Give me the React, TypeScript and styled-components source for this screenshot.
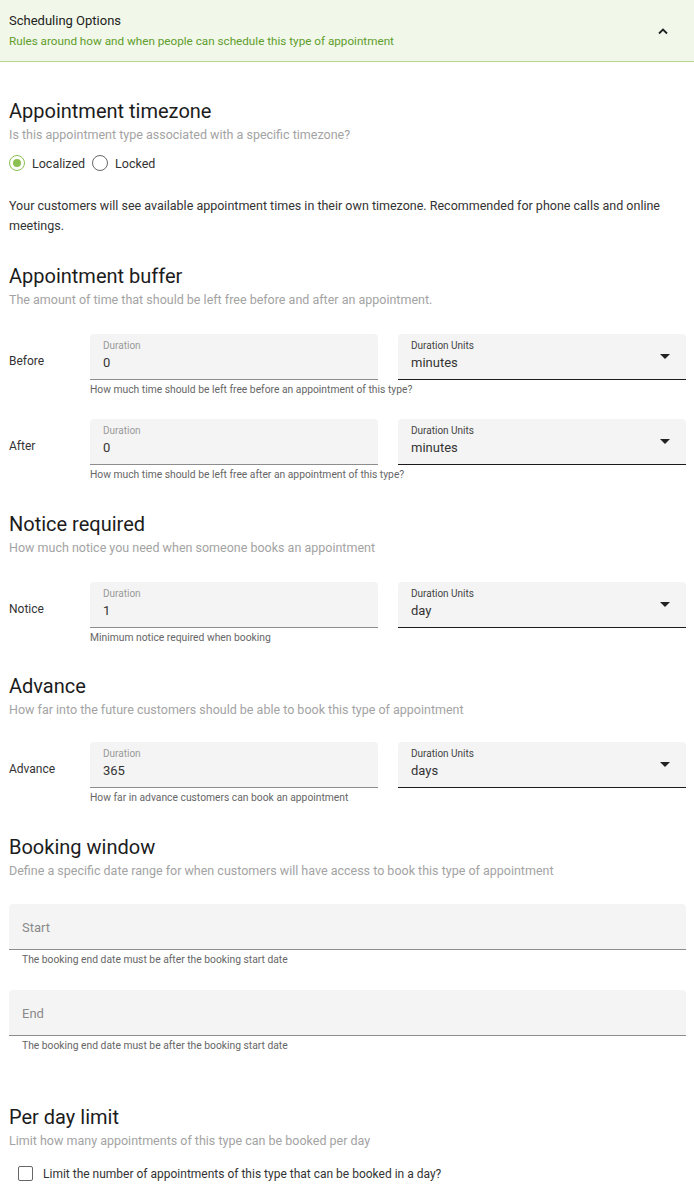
import React, { useState } from "react";
import styled, { createGlobalStyle } from "styled-components";

const GlobalStyle = createGlobalStyle`
  html, body {
    margin: 0;
    padding: 0;
    background: #ffffff;
    font-family: Roboto, "Noto Sans", "Liberation Sans", sans-serif;
  }
  * { box-sizing: border-box; }
`;

const Page = styled.div`
  width: 694px;
  background: #fff;
`;

const Header = styled.div`
  display: flex;
  align-items: center;
  justify-content: space-between;
  height: 62px;
  padding: 0 25px 0 9px;
  background: #f1f7e9;
  border-bottom: 1px solid #b4d78f;
`;

const HeaderText = styled.div`
  display: flex;
  flex-direction: column;
  gap: 4px;
`;

const HeaderTitle = styled.div`
  font-size: 13px;
  line-height: 16px;
  color: #222;
`;

const HeaderSub = styled.div`
  font-size: 11.7px;
  line-height: 16px;
  color: #5f9d2c;
`;

const Body = styled.div`
  padding: 0 8px 40px 9px;
`;

const Section = styled.section<{ $top: number }>`
  margin-top: ${(p) => p.$top}px;
`;

const Heading = styled.h2`
  margin: 0;
  font-size: 20px;
  line-height: 24px;
  font-weight: 400;
  color: #1c1c1c;
`;

const Sub = styled.p`
  margin: 4px 0 0;
  font-size: 12.5px;
  line-height: 16px;
  color: #a3a3a3;
`;

const RadioRow = styled.div`
  display: flex;
  align-items: center;
  margin-top: 10px;
  height: 20px;
`;

const RadioOption = styled.label`
  display: flex;
  align-items: center;
  gap: 7px;
  margin-right: 7px;
  font-size: 12.5px;
  color: #333;
  cursor: pointer;
`;

const RadioCircle = styled.span<{ $on: boolean }>`
  position: relative;
  width: 16px;
  height: 16px;
  border-radius: 50%;
  border: 1.5px solid ${(p) => (p.$on ? "#8cc152" : "#666")};
  &::after {
    content: "";
    display: ${(p) => (p.$on ? "block" : "none")};
    position: absolute;
    inset: 3px;
    border-radius: 50%;
    background: #8cc152;
  }
`;

const Paragraph = styled.p`
  margin: 23px 0 0;
  font-size: 12.5px;
  line-height: 20px;
  color: #333;
  padding-right: 24px;
`;

const Rows = styled.div<{ $top?: number }>`
  margin-top: ${(p) => p.$top ?? 26}px;
  display: flex;
  flex-direction: column;
  gap: 23px;
`;

const FieldRow = styled.div`
  display: grid;
  grid-template-columns: 61px 288px 288px;
  column-gap: 20px;
  align-items: start;
`;

const RowLabel = styled.div`
  font-size: 12px;
  line-height: 16px;
  padding-top: 19px;
  color: #333;
`;

const FieldCol = styled.div`
  display: flex;
  flex-direction: column;
`;

const FieldBox = styled.div<{ $dark?: boolean }>`
  position: relative;
  height: 46px;
  background: #f4f4f4;
  border-radius: 4px 4px 0 0;
  border-bottom: 1px solid ${(p) => (p.$dark ? "#1a1a1a" : "#8d8d8d")};
  padding: 6px 13px 0;
  display: flex;
  flex-direction: column;
`;

const FloatLabel = styled.span<{ $dark?: boolean }>`
  font-size: 10px;
  line-height: 12px;
  color: ${(p) => (p.$dark ? "#444" : "#9a9a9a")};
`;

const Value = styled.span`
  margin-top: 3px;
  font-size: 13px;
  line-height: 16px;
  color: #333;
`;

const Placeholder = styled.span`
  margin-top: 10px;
  font-size: 13px;
  line-height: 16px;
  color: #8a8a8a;
`;

const Caret = styled.span`
  position: absolute;
  right: 16px;
  top: 20px;
  width: 0;
  height: 0;
  border-left: 5px solid transparent;
  border-right: 5px solid transparent;
  border-top: 5px solid #222;
`;

const Helper = styled.div<{ $inset?: boolean }>`
  margin-top: 4px;
  padding-left: ${(p) => (p.$inset ? 13 : 0)}px;
  font-size: 10.3px;
  line-height: 12px;
  color: #666;
  white-space: nowrap;
`;

const WideFields = styled.div`
  margin-top: 25px;
  display: flex;
  flex-direction: column;
  gap: 24px;
`;

const CheckRow = styled.label`
  display: flex;
  align-items: center;
  gap: 10px;
  margin-top: 17px;
  padding-left: 9px;
  font-size: 12px;
  color: #333;
  cursor: pointer;
`;

const CheckBox = styled.span`
  width: 15px;
  height: 15px;
  border: 1.5px solid #666;
  border-radius: 2px;
`;

type DurRow = {
  label: string;
  value: string;
  unit: string;
  help: string;
};

const DurationRow: React.FC<DurRow> = ({ label, value, unit, help }) => (
  <FieldRow>
    <RowLabel>{label}</RowLabel>
    <FieldCol>
      <FieldBox>
        <FloatLabel>Duration</FloatLabel>
        <Value>{value}</Value>
      </FieldBox>
      <Helper>{help}</Helper>
    </FieldCol>
    <FieldCol>
      <FieldBox $dark>
        <FloatLabel $dark>Duration Units</FloatLabel>
        <Value>{unit}</Value>
        <Caret />
      </FieldBox>
    </FieldCol>
  </FieldRow>
);

const ChevronUp = () => (
  <svg width="12" height="8" viewBox="0 0 12 8">
    <path d="M2 6.5 L6 2.5 L10 6.5" fill="none" stroke="#222" strokeWidth="1.8" />
  </svg>
);

export default function App() {
  const [tz, setTz] = useState("localized");
  return (
    <Page>
      <GlobalStyle />
      <Header>
        <HeaderText>
          <HeaderTitle>Scheduling Options</HeaderTitle>
          <HeaderSub>Rules around how and when people can schedule this type of appointment</HeaderSub>
        </HeaderText>
        <ChevronUp />
      </Header>
      <Body>
        <Section $top={37}>
          <Heading>Appointment timezone</Heading>
          <Sub>Is this appointment type associated with a specific timezone?</Sub>
          <RadioRow>
            <RadioOption onClick={() => setTz("localized")}>
              <RadioCircle $on={tz === "localized"} />
              Localized
            </RadioOption>
            <RadioOption onClick={() => setTz("locked")}>
              <RadioCircle $on={tz === "locked"} />
              Locked
            </RadioOption>
          </RadioRow>
          <Paragraph>
            Your customers will see available appointment times in their own timezone. Recommended for phone calls and online meetings.
          </Paragraph>
        </Section>

        <Section $top={28}>
          <Heading>Appointment buffer</Heading>
          <Sub>The amount of time that should be left free before and after an appointment.</Sub>
          <Rows>
            <DurationRow label="Before" value="0" unit="minutes" help="How much time should be left free before an appointment of this type?" />
            <DurationRow label="After" value="0" unit="minutes" help="How much time should be left free after an appointment of this type?" />
          </Rows>
        </Section>

        <Section $top={31}>
          <Heading>Notice required</Heading>
          <Sub>How much notice you need when someone books an appointment</Sub>
          <Rows>
            <DurationRow label="Notice" value="1" unit="day" help="Minimum notice required when booking" />
          </Rows>
        </Section>

        <Section $top={30}>
          <Heading>Advance</Heading>
          <Sub>How far into the future customers should be able to book this type of appointment</Sub>
          <Rows $top={24}>
            <DurationRow label="Advance" value="365" unit="days" help="How far in advance customers can book an appointment" />
          </Rows>
        </Section>

        <Section $top={31}>
          <Heading>Booking window</Heading>
          <Sub>Define a specific date range for when customers will have access to book this type of appointment</Sub>
          <WideFields>
            <FieldCol>
              <FieldBox>
                <Placeholder>Start</Placeholder>
              </FieldBox>
              <Helper $inset>The booking end date must be after the booking start date</Helper>
            </FieldCol>
            <FieldCol>
              <FieldBox>
                <Placeholder>End</Placeholder>
              </FieldBox>
              <Helper $inset>The booking end date must be after the booking start date</Helper>
            </FieldCol>
          </WideFields>
        </Section>

        <Section $top={53}>
          <Heading>Per day limit</Heading>
          <Sub>Limit how many appointments of this type can be booked per day</Sub>
          <CheckRow>
            <CheckBox />
            Limit the number of appointments of this type that can be booked in a day?
          </CheckRow>
        </Section>
      </Body>
    </Page>
  );
}
